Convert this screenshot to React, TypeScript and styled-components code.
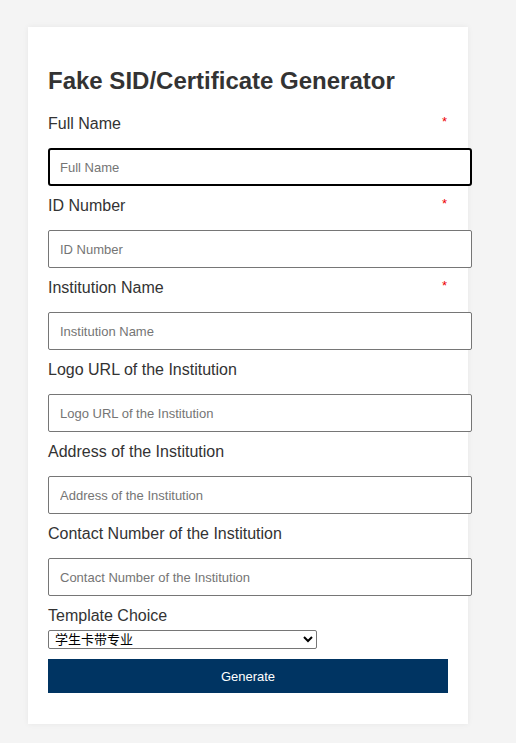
import React from "react";
import styled, { createGlobalStyle } from "styled-components";

const GlobalStyle = createGlobalStyle`
    html, body {
        margin: 0;
        padding: 0;
        background: #f4f4f4;
        font-family: "Liberation Sans", Arial, sans-serif;
        color: #333;
    }
`;

const Page = styled.div`
    padding: 27px 0 20px 28px;
`;

const Card = styled.form`
    width: 400px;
    padding: 40px 20px 31px;
    background: #fff;
    box-shadow: 0 0 6px rgba(0, 0, 0, 0.06);
`;

const Title = styled.h1`
    margin: 0 0 19px;
    font-size: 24px;
    line-height: 28px;
    font-weight: 700;
    color: #333;
`;

const Field = styled.div`
    display: flex;
    flex-direction: column;
    margin-bottom: 10px;
`;

const LabelRow = styled.label`
    display: flex;
    justify-content: space-between;
    align-items: flex-start;
    padding-top: 1px;
    font-size: 16px;
    line-height: 18px;
    margin-bottom: 15px;
`;

const Required = styled.span`
    color: #e00;
    font-size: 13px;
    line-height: 14px;
    margin-right: 1px;
`;

const Input = styled.input<{ $active?: boolean }>`
    box-sizing: border-box;
    width: calc(100% + 24px);
    height: 38px;
    padding: 0 ${(p) => (p.$active ? "10px" : "11px")};
    border: ${(p) => (p.$active ? "2px solid #000" : "1px solid #767676")};
    border-radius: ${(p) => (p.$active ? "3px" : "2px")};
    font-family: "Liberation Sans", Arial, sans-serif;
    font-size: 13px;
    color: #333;
    background: #fff;
    outline: none;
    &::placeholder {
        color: #757575;
    }
`;

const SelectLabel = styled.label`
    display: block;
    padding-top: 1px;
    font-size: 16px;
    line-height: 18px;
    margin-bottom: 5px;
`;

const Select = styled.select`
    display: block;
    box-sizing: border-box;
    width: 269px;
    height: 19px;
    padding: 0 0 0 2px;
    border: 1px solid #767676;
    border-radius: 2px;
    font-family: "Liberation Sans", "Noto Sans CJK SC", sans-serif;
    font-size: 13px;
    color: #000;
    background: #fff;
    margin-bottom: 10px;
`;

const Button = styled.button`
    display: block;
    width: 100%;
    height: 34px;
    border: none;
    background: #003462;
    color: #fff;
    font-family: "Liberation Sans", Arial, sans-serif;
    font-size: 13px;
    cursor: pointer;
`;

const fields = [
    { name: "Full Name", required: true },
    { name: "ID Number", required: true },
    { name: "Institution Name", required: true },
    { name: "Logo URL of the Institution", required: false },
    { name: "Address of the Institution", required: false },
    { name: "Contact Number of the Institution", required: false },
];

const App: React.FC = () => {
    return (
        <>
            <GlobalStyle />
            <Page>
                <Card onSubmit={(e) => e.preventDefault()}>
                    <Title>Fake SID/Certificate Generator</Title>
                    {fields.map((f, i) => (
                        <Field key={f.name}>
                            <LabelRow>
                                <span>{f.name}</span>
                                {f.required && <Required>*</Required>}
                            </LabelRow>
                            <Input placeholder={f.name} $active={i === 0} />
                        </Field>
                    ))}
                    <SelectLabel>Template Choice</SelectLabel>
                    <Select defaultValue="pro">
                        <option value="pro">学生卡带专业</option>
                        <option value="basic">学生卡</option>
                        <option value="cert">证书</option>
                    </Select>
                    <Button type="submit">Generate</Button>
                </Card>
            </Page>
        </>
    );
};

export default App;
